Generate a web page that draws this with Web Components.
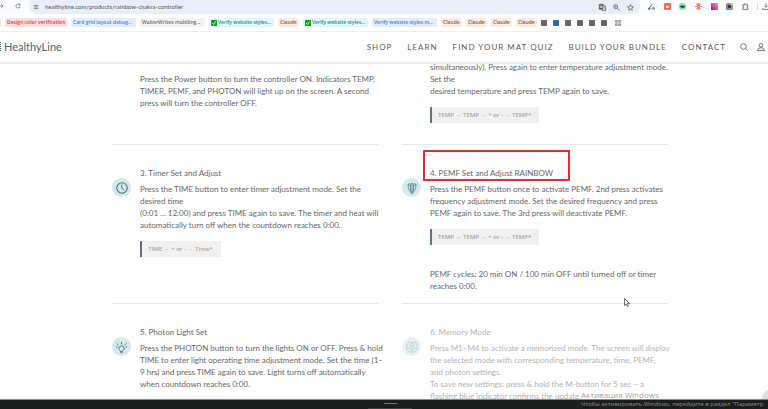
<!DOCTYPE html>
<html lang="en">
<head>
<meta charset="utf-8">
<title>HealthyLine – Rainbow Chakra Controller</title>
<style>
body{margin:0;height:100vh;overflow:hidden;background:#fff;font-family:Lato,"Open Sans",sans-serif;color:#666}
</style>
</head>
<body>
<hl-app></hl-app>
<script>
const define=(name,html)=>customElements.define(name,class extends HTMLElement{
  constructor(){super();const t=document.createElement('template');
    t.innerHTML='<style>*,::after{box-sizing:border-box}button{all:unset;display:block;cursor:pointer}svg{display:block;overflow:visible}</style>'+(typeof html==='function'?html(this):html);
    this.attachShadow({mode:'open'}).append(t.content.cloneNode(true));}
});

const icons={
 forward:'<path d="M0 12h20M13 5l7 7-7 7"/>',
 reload:'<path d="M20 12a8 8 0 1 1-2.5-6M20 2v6h-6"/>',
 tune:'<path d="M3 7h6M17 7h5M2 17h5M15 17h7" stroke-width="3"/><circle cx="13" cy="7" r="3"/><circle cx="11" cy="17" r="3"/>',
 translate:'<path d="M1 1h13l2 5v12H1z" fill="#555"/><path d="M11 7h12v16H12z" fill="#fff"/><path d="M13 11h8M17 9v2M20 11q-1 6-6 8M15 13q2 4 6 6" stroke-width="1.6"/><circle cx="7.500" cy="9" r="3.500" stroke="#fff"/>',
 zoom:'<circle cx="9" cy="9" r="7"/><path d="M14 14l9 9M6 9h6M9 6v6" stroke-width="2.500"/>',
 star:'<path d="M12 2l3 7 7 .6-5.400 4.700L18.300 22 12 17.800 5.700 22l1.700-7.700L2 9.600 9 9z"/>',
 slash:'<path d="M3 20L15 3M9 20h3M17 13v9M21 15v7" stroke="#31546e" stroke-width="3"/><circle cx="4" cy="20" r="2" fill="#31546e"/>',
 orange:'<rect width="24" height="24" rx="4" fill="#f26b43" stroke="none"/><path d="M6 8l5 4 6-4-2 9H8z" fill="#fff" stroke="none"/>',
 green:'<circle cx="12" cy="12" r="12" fill="#7be695" stroke="none"/><path d="M3 9h18l-4 7H7z" fill="#174b36" stroke="none"/>',
 burst:'<g stroke="#df8264" stroke-width="3"><path d="M12 0v24M0 12h24M4 4l16 16M20 4L4 20M7 1l10 22M17 1L7 23"/></g>',
 grad:'<defs><linearGradient id="g" x1="1" y1="0" x2="0" y2="1"><stop stop-color="#f9a18e"/><stop offset=".5" stop-color="#e34c96"/><stop offset="1" stop-color="#63279b"/></linearGradient></defs><rect width="24" height="24" fill="url(#g)" stroke="none"/>',
 wheel:'<g stroke="none"><rect width="24" height="24" rx="7" fill="#de5b80"/><path d="M12 0h7q5 0 5 5v7H12z" fill="#efb454"/><path d="M12 12h12v7q0 5-5 5h-7z" fill="#54bf7e"/><path d="M0 12h12v12H5q-5 0-5-5z" fill="#6685dd"/></g><circle cx="12" cy="12" r="7" fill="#263541" stroke="#cfd6ef" stroke-width="1"/>',
 puzzle:'<path d="M3 6h6V3h5v3h6v6h-2v5h2v5H3v-6h2v-5H3z" stroke-width="2.500"/>',
 download:'<path d="M14 1v12M8 9l6 6 6-6M2 17v5h22"/>',
 search:'<circle cx="10.500" cy="10.500" r="8.500"/><path d="M17 17l6 6"/>',
 user:'<circle cx="12" cy="7" r="5.500"/><path d="M1 23q1-9 11-9t11 9z"/>',
 grid:'<path d="M2 2h7v7H2zM15 2h7v7h-7zM2 15h7v7H2zM15 15h7v7h-7z"/>',
 clock:'<circle cx="12" cy="12" r="10.500" stroke-width="2.200"/><path d="M11.500 5v7l5 4" stroke-width="2"/>',
 pemf:'<path d="M9 18V6l3-4 3 4v12l-3 2zM12 2v22M9 18Q4 16 4 5l5 3M15 18q5-2 5-13l-5 3M4 5q3-3 5-1M20 5q-3-3-5-1M7 19l5 4 5-4" stroke-width="1.400"/>',
 bulb:'<path d="M9 20c0-3-4-4-4-8a7 7 0 0 1 14 0c0 4-4 5-4 8zM9 23h6M12 1v-6M4 3L-1-1M20 3l5-4M1 9l-4-2M23 9l4-2" stroke-width="2.400"/>',
 brain:'<path d="M12 2v21M12 5Q8-1 5 4 0 5 2 10q-4 4 1 8 2 6 9 4M12 5q4-6 7-1 5 1 3 6 4 4-1 8-2 6-9 4M6 8q5-1 3 5M3 14q4-2 6 4M18 8q-5-1-3 5M21 14q-4-2-6 4M20-1v4" stroke-width="1.200"/>'
};
define('hl-icon',e=>`<style>:host{display:block;width:var(--size,8px);height:var(--size,8px);flex:none}svg{width:100%;height:100%}</style>
<svg viewBox="0 0 24 24" fill="none" stroke="currentColor" stroke-width="2.500" aria-hidden="true">${icons[e.getAttribute('name')]}</svg>`);

define('browser-toolbar',`<style>
:host{display:flex;align-items:flex-start;height:14px;background:#fafcff;color:#555;overflow:hidden}
.left{display:flex;gap:11px;width:29px;flex:none;padding-top:3px;--size:6px}
.left button:first-child{margin-left:-2px}
form{margin:0;flex:1;display:flex;align-items:center;height:14px;background:#e9eff9;border-radius:4px 4px 8px 8px;padding:0 6px 0 4px;gap:6px;min-width:0;--size:6px}
input{all:unset;flex:1;min-width:0;font-size:6px;line-height:8px;color:#555}
.page{display:flex;gap:7px;--size:7px}
.ext{display:flex;align-items:center;gap:8px;flex:none;padding:3px 0 0 8px;width:128px;--size:7px}
.apps{display:flex;justify-content:space-between;width:101px;flex:none}
i{width:1px;height:7px;background:#c3dcf8;flex:none;margin-right:-4px}
</style>
<div class="left"><button aria-label="Forward"><hl-icon name="forward"></hl-icon></button><button aria-label="Reload"><hl-icon name="reload"></hl-icon></button></div>
<form><button type="button" aria-label="Site information"><hl-icon name="tune"></hl-icon></button>
<input aria-label="Address" value="healthyline.com/products/rainbow-chakra-controller">
<div class="page"><button type="button" aria-label="Translate"><hl-icon name="translate"></hl-icon></button><button type="button" aria-label="Zoom"><hl-icon name="zoom"></hl-icon></button><button type="button" aria-label="Bookmark"><hl-icon name="star"></hl-icon></button></div></form>
<div class="ext"><div class="apps">${['slash','orange','green','burst','grad','wheel','puzzle'].map(n=>`<button aria-label="Extension ${n}"><hl-icon name="${n}"></hl-icon></button>`).join('')}</div><i></i><button aria-label="Downloads"><hl-icon name="download"></hl-icon></button></div>`);

define('tab-chip',e=>`<style>
:host{display:block;flex:none;width:65px}
:host([tone=claude]){width:21px}
a{display:flex;align-items:center;height:9px;padding:0 2px;border-radius:2px;font:600 5px/9px "Open Sans",sans-serif;text-decoration:none;white-space:nowrap;overflow:hidden;background:#f2f2f2;color:#707070}
:host([tone=red]) a{background:#fbdedd;color:#d0413b}
:host([tone=blue]) a{background:#e3edfd;color:#4a82de}
:host([tone=teal]) a{background:#e1f6f8;color:#249294}
:host([tone=claude]) a{background:#fdebdf;color:#6e625a}
svg{width:6px;height:6px;flex:none;margin-right:1px}
</style><a href="#">${e.hasAttribute('check')?'<svg viewBox="0 0 12 12"><rect width="12" height="12" fill="#12a51b"/><path d="M2.500 6l2.500 3 4.500-6" fill="none" stroke="#fff" stroke-width="1.600"/></svg>':''}<slot></slot></a>`);

define('bookmark-bar',`<style>
:host{display:flex;align-items:center;gap:4px;height:18px;border-bottom:1px solid #eceff3;overflow:hidden}
.end{width:1px;height:9px;background:#fdebdf;flex:none}
.fav{display:flex;gap:6px;align-items:center;color:#555;--size:6px}
.fav button{width:6px;height:6px;background:#63666a;border-radius:1px}
.fav .on{background:#2468ce}
.fav .all{background:none;margin-left:2px}
</style><span class="end"></span>
<tab-chip tone="red" style="width:62px">Design color verification</tab-chip><tab-chip tone="blue">Card grid layout debug...</tab-chip><tab-chip>WalterWrites multiling...</tab-chip><tab-chip tone="teal" check>Verify website styles...</tab-chip><tab-chip tone="claude">Claude</tab-chip><tab-chip tone="teal" check>Verify website styles...</tab-chip><tab-chip tone="blue">Verify website styles m...</tab-chip>${'<tab-chip tone="claude">Claude</tab-chip>'.repeat(4)}
<div class="fav">${[0,1,0,0,0,0].map((v,i)=>`<button class="${v?'on':''}" aria-label="Bookmark ${i+1}"></button>`).join('')}<button class="all" aria-label="All bookmarks"><hl-icon name="grid"></hl-icon></button></div>`);

define('site-header',`<style>
:host{display:flex;align-items:center;height:32px;border-bottom:2px solid #ededed;background:#fff}
.logo{display:flex;align-items:center;gap:3px;color:#456970;font-size:11px;line-height:16px;text-decoration:none;margin-right:auto}
.logo svg{width:1px;height:10px}
nav{display:flex;gap:15px;white-space:nowrap}
nav a{color:#5a5a5a;text-decoration:none;font-size:8px;line-height:12px;letter-spacing:1px}
.tools{display:flex;gap:9px;padding:0 3px 0 14px;color:#555;--size:8px}
</style>
<a class="logo" href="#"><svg viewBox="0 0 2 20"><path d="M0 1h2M0 5h2M0 9h2M0 13h2M0 17h2" stroke="#456970" stroke-width="2"/></svg>HealthyLine</a>
<nav><a href="#">SHOP</a><a href="#">LEARN</a><a href="#">FIND YOUR MAT QUIZ</a><a href="#">BUILD YOUR BUNDLE</a><a href="#">CONTACT</a></nav>
<div class="tools"><button aria-label="Search"><hl-icon name="search"></hl-icon></button><button aria-label="Account"><hl-icon name="user"></hl-icon></button></div>`);

define('key-sequence',`<style>
:host{display:block;width:fit-content;margin-top:10px;padding:2px 8px 2px 6px;border-left:2px solid #4f7c83;background:#f1f1f1;color:#a6a6a6;font:600 6px/12px "Open Sans",sans-serif;white-space:nowrap}
</style><slot></slot>`);

define('step-card',e=>`<style>
:host{display:flex;gap:9px;align-items:flex-start;padding:22px 0 12px;border-bottom:1px solid #e7e7e7}
:host([continued]){padding-top:0}
:host([faded]){opacity:.5}
.badge{width:19px;height:19px;margin-top:11px;border-radius:50%;background:#d2e9ed;color:#4a757c;display:grid;place-items:center;flex:none;--size:12px}
:host([icon=bulb]) .badge{--size:9px;padding-top:3px}
:host([continued]) .badge{visibility:hidden}
.body{flex:1;min-width:0;font-size:8px;line-height:12px;white-space:nowrap}
h2{position:relative;margin:0 0 4px;font-size:8px;line-height:12px;font-weight:400}
:host([marked]) h2::after{content:"";position:absolute;left:-7px;top:-17px;width:147px;height:31px;border:2px solid #e12d2d}
</style><div class="badge">${e.hasAttribute('icon')?`<hl-icon name="${e.getAttribute('icon')}"></hl-icon>`:''}</div>
<div class="body">${e.hasAttribute('heading')?`<h2>${e.getAttribute('heading')}</h2>`:''}<slot></slot></div>`);

define('step-grid',`<style>
:host{display:grid;grid-template-columns:minmax(0,1fr) minmax(0,1fr);grid-template-rows:84px 159px auto;column-gap:24px;margin-top:-3px;padding:0 100px 0 112px}
p{margin:0}.gap{margin-top:12px}.note{margin-top:23px}
</style>
<step-card continued><p class="gap">Press the Power button to turn the controller ON. Indicators TEMP,<br>TIMER, PEMF, and PHOTON will light up on the screen. A second<br>press will turn the controller OFF.</p></step-card>
<step-card continued><p>simultaneously). Press again to enter temperature adjustment mode.<br>Set the<br>desired temperature and press TEMP again to save.</p><key-sequence>TEMP → TEMP → + or - → TEMP*</key-sequence></step-card>
<step-card icon="clock" heading="3. Timer Set and Adjust"><p>Press the TIME button to enter timer adjustment mode. Set the<br>desired time<br>(0:01 ... 12:00) and press TIME again to save. The timer and heat will<br>automatically turn off when the countdown reaches 0:00.</p><key-sequence>TIME → + or - → Time*</key-sequence></step-card>
<step-card icon="pemf" marked heading="4. PEMF Set and Adjust RAINBOW"><p>Press the PEMF button once to activate PEMF. 2nd press activates<br>frequency adjustment mode. Set the desired frequency and press<br>PEMF again to save. The 3rd press will deactivate PEMF.</p><key-sequence>TEMP → TEMP → + or - → TEMP*</key-sequence><p class="note">PEMF cycles: 20 min ON / 100 min OFF until turned off or timer<br>reaches 0:00.</p></step-card>
<step-card icon="bulb" heading="5. Photon Light Set"><p>Press the PHOTON button to turn the lights ON or OFF. Press &amp; hold<br>TIME to enter light operating time adjustment mode. Set the time (1–<br>9 hrs) and press TIME again to save. Light turns off automatically<br>when countdown reaches 0:00.</p></step-card>
<step-card icon="brain" faded heading="6. Memory Mode"><p>Press M1–M4 to activate a memorized mode. The screen will display<br>the selected mode with corresponding temperature, time, PEMF,<br>and photon settings.<br>To save new settings: press &amp; hold the M-button for 5 sec – a<br>flashing blue indicator confirms the update</p></step-card>`);

define('task-bar',`<style>
:host{display:grid;justify-items:center;align-content:space-between;height:10px;padding:3px 0 0 12px;background:#1c1d1d;border-top:1px solid #7f8986;flex:none;position:relative}
i{width:13px;height:1px;background:#777}
i+i{width:44px;background:#3c3d3d}
</style><i></i><i></i>`);

define('activation-notice',`<style>
:host{position:absolute;left:581px;right:0;bottom:0;overflow:hidden;white-space:nowrap;font-family:"Open Sans","Noto Sans",sans-serif;color:#a4a4a4;pointer-events:none}
b,span{display:block;font-weight:400}b{font-size:8px;line-height:11px}span{font-size:6px;line-height:9px;color:#8c8c8c}
</style><b>Активация Windows</b><span>Чтобы активировать Windows, перейдите в раздел "Параметр</span>`);

define('mouse-pointer',`<style>:host{position:absolute;left:624px;top:298px}svg{width:6px;height:9px}</style>
<svg viewBox="0 0 12 18"><path d="M1 1v14l3.500-3 2.500 5 2-1-2.300-5H11z" fill="#fff" stroke="#444" stroke-width="1.500"/></svg>`);

define('chat-bubble',`<style>:host{position:absolute;right:-14px;bottom:0;width:20px;height:20px;border-radius:50%;background:#dedede}</style>`);

define('hl-app',`<style>
:host{display:flex;flex-direction:column;height:100vh;position:relative;overflow:hidden}
browser-toolbar,bookmark-bar,site-header{flex:none}
main{flex:1;min-height:0;overflow:hidden}
</style><browser-toolbar></browser-toolbar><bookmark-bar></bookmark-bar><site-header></site-header>
<main><step-grid></step-grid></main><chat-bubble></chat-bubble><task-bar></task-bar><activation-notice></activation-notice><mouse-pointer></mouse-pointer>`);
</script>
</body>
</html>
